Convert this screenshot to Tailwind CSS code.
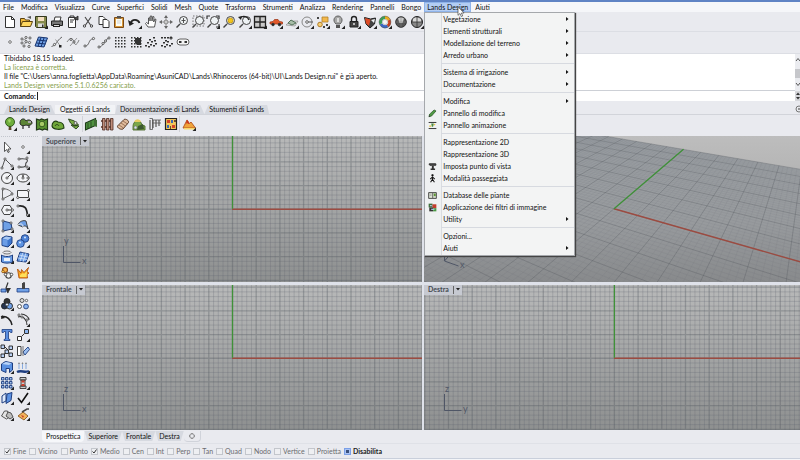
<!DOCTYPE html>
<html lang="it">
<head>
<meta charset="utf-8">
<title>Lands Design</title>
<script src="https://cdn.jsdelivr.net/npm/@tailwindcss/browser@4"></script>
</head>
<body class="h-screen overflow-hidden bg-[#e9eaef] text-[7px] leading-[9px] text-[#111] font-['Lato','Noto_Sans',sans-serif]">
<div class="flex h-full flex-col border-t-2 border-[#5f83c4]">

  <nav class="relative z-20 h-[10px] shrink-0 bg-[#f5f6f9]" aria-label="Menu principale">
    <ul class="flex h-full items-stretch" id="menubar">
      <li><button class="h-full px-[3px]">File</button></li>
      <li><button class="h-full pl-1 pr-[3px]">Modifica</button></li>
      <li><button class="h-full pl-1 pr-[3px]">Visualizza</button></li>
      <li><button class="h-full pl-1 pr-[3px]">Curve</button></li>
      <li><button class="h-full pl-1 pr-[3px]">Superfici</button></li>
      <li><button class="h-full pl-1 pr-[3px]">Solidi</button></li>
      <li><button class="h-full pl-1 pr-[3px]">Mesh</button></li>
      <li><button class="h-full pl-1 pr-[3px]">Quote</button></li>
      <li><button class="h-full pl-1 pr-[3px]">Trasforma</button></li>
      <li><button class="h-full pl-1 pr-[3px]">Strumenti</button></li>
      <li><button class="h-full pl-1 pr-[3px]">Analizza</button></li>
      <li><button class="h-full pl-1 pr-[3px]">Rendering</button></li>
      <li><button class="h-full pl-1 pr-[3px]">Pannelli</button></li>
      <li><button class="h-full pl-1 pr-[3px]">Bongo</button></li>
      <li class="relative">
        <button class="h-full bg-[#b3cdf3] px-[3px] outline outline-1 -outline-offset-1 outline-[#8fb4ea]" aria-expanded="true">Lands Design</button>
        <svg class="absolute left-[33px] top-1 z-10" width="8" height="12" viewBox="0 0 8 12" aria-hidden="true"><path d="M1 .7v8.6l2-1.8 1.3 3 1.4-.6-1.3-2.9h2.7z" fill="#fff" stroke="#444" stroke-width=".7"/></svg>
        <ul id="menu" class="absolute left-0 top-full w-[151px] border border-[#a5a8ac] bg-[linear-gradient(90deg,#eff1f2_16px,#d9dce0_16px,#d9dce0_17px,#f3f4f4_17px)] pb-px shadow-[1px_1px_1px_#444]"></ul>
      </li>
      <li><button class="h-full px-1">Aiuti</button></li>
    </ul>
  </nav>

  <div class="border-b border-[#dcdee4] pl-[3px] pt-px"><div id="std" class="flex h-[18px] w-[421px] items-center justify-between"></div></div>
  <div class="border-b border-[#dcdee4] pb-px pl-[3px]"><div id="pts" class="flex h-5 w-[187px] items-center justify-between"></div></div>

  <section class="flex bg-white" aria-label="Comandi">
    <div class="grow">
      <div class="border-b border-[#cdd0d6] pl-1">
        <p>Tibidabo 18.15 loaded.</p>
        <p class="text-[#86a04c]">La licenza è corretta.</p>
        <p>Il file "C:\Users\anna.foglietta\AppData\Roaming\AsuniCAD\Lands\Rhinoceros (64-bit)\UI\Lands Design.rui" è già aperto.</p>
        <p class="text-[#86a04c]">Lands Design versione 5.1.0.6256 caricato.</p>
      </div>
      <div class="flex h-[10px] items-center pl-1">
        <label for="cmd" class="font-bold">Comando:</label>
        <span class="ml-px h-2 w-px bg-[#222]"></span>
        <input id="cmd" class="h-2 grow outline-none">
      </div>
    </div>
    <div class="flex w-[5px] flex-col justify-between bg-[#ebecf0]">
      <svg width="5" height="36" aria-hidden="true"><path d="M1 7l2-2.500 2 2.500" fill="none" stroke="#555"/><rect y="15" width="5" height="9" fill="#c6c7cb"/><path d="M1 29l2 2.500 2-2.500" fill="none" stroke="#555"/></svg>
      <svg width="5" height="10" aria-hidden="true"><rect width="5" height="10" fill="#d5d6da"/><path d="M1 4l2-2.500 2 2.500zM1 6l2 2.500L5 6z" fill="#333"/></svg>
    </div>
  </section>

  <div class="flex items-end border-b border-[#d2d4da] pl-1 pt-1">
    <button class="h-[9px] bg-[#d6d9e0] px-[5px] [clip-path:polygon(4px_0,calc(100%-4px)_0,100%_100%,0_100%)]">Lands Design</button>
    <button class="h-[9px] bg-[#f2f3f6] px-[5px]" aria-selected="true">Oggetti di Lands</button>
    <button class="h-[9px] bg-[#d6d9e0] px-[5px] [clip-path:polygon(2px_0,calc(100%-4px)_0,100%_100%,0_100%)]">Documentazione di Lands</button>
    <button class="h-[9px] bg-[#d6d9e0] px-[5px] [clip-path:polygon(4px_0,calc(100%-2px)_0,100%_100%,0_100%)]">Stumenti di Lands</button>
    <svg class="ml-auto" width="5" height="9" aria-hidden="true"><circle cx="4" cy="4" r="3" fill="none" stroke="#777"/><circle cx="4" cy="4" r="1" fill="#777"/></svg>
  </div>
  <div class="flex h-[21px] shrink-0 items-center pb-[3px] pl-[3px]">
    <div id="land1" class="flex gap-[2px]"></div>
    <span class="mx-px h-4 w-px bg-[#d0d2d8]"></span>
    <div id="land2" class="flex gap-[2px]"></div>
    <span class="mx-px h-4 w-px bg-[#d0d2d8]"></span>
    <div id="land3" class="flex pl-px"></div>
  </div>

  <main class="flex min-h-0 grow">
    <aside class="flex w-[42px] shrink-0 flex-col" aria-label="Strumenti">
      <div class="mx-px w-[37px] border-t border-dotted border-[#c3c6cd]"></div>
      <div id="side" class="grid grow grid-cols-2 content-between pb-[9px] pr-[10px] pt-[3px]"></div>
    </aside>
    <div class="grid grow grid-cols-[380fr_376fr] grid-rows-2 gap-x-[2px] gap-y-[3px] bg-[#dfe2ea]">
      <section class="relative overflow-hidden bg-linear-to-b from-[#b8b9b9] to-[#8e9090]">
        <svg class="absolute size-full" aria-hidden="true">
          <defs><g id="grid"></g></defs>
          <svg x="50%" y="50%" overflow="visible"><use href="#grid"/><path d="M0 .5h900" stroke="#9c4b41" stroke-width="1.300"/><path d="M.5 0v-600" stroke="#3f9138" stroke-width="1.300"/></svg>
        </svg>
        <header class="relative flex h-[10px] w-fit items-center bg-[#c6c9d1] pl-1 font-bold text-[#454a52]"><h2>Superiore</h2><button class="ml-1 flex h-2 items-center border-l border-[#666] px-[2px]" aria-label="Menu vista Superiore"><svg width="4" height="3"><path d="M0 0h4L2 2.500z" fill="#222"/></svg></button></header>
        <svg class="absolute bottom-4 left-[20px]" width="28" height="30" aria-hidden="true"><path d="M1.500 10v16.500h17" fill="none" stroke="#4f5666"/><text x="2" y="8" font-size="9" fill="#4f5666">y</text><text x="20" y="28" font-size="9" fill="#4f5666">x</text></svg>
      </section>

      <section class="relative overflow-hidden bg-linear-to-b from-[#bdbdbd] to-[#9c9c9c]">
        <svg id="persp" class="absolute size-full" viewBox="0 0 376 146" preserveAspectRatio="xMidYMid slice" aria-hidden="true">
          <defs><linearGradient id="gnd" gradientUnits="userSpaceOnUse" x1="0" y1="0" x2="0" y2="146"><stop offset="0" stop-color="#9a9fa3"/><stop offset=".6" stop-color="#979a9d"/><stop offset="1" stop-color="#888a8c"/></linearGradient></defs>
        </svg>
        <svg class="absolute bottom-3 left-[19px]" width="26" height="20" aria-hidden="true"><path d="M1.500 11l6-7M1.500 11l14 5M1.500 11V0" fill="none" stroke="#4f5666"/><text x="17" y="18" font-size="9" fill="#4f5666">x</text></svg>
      </section>

      <section class="relative overflow-hidden bg-linear-to-b from-[#b8b9b9] to-[#8e9090]">
        <svg class="absolute size-full" aria-hidden="true"><svg x="50%" y="50%" overflow="visible"><use href="#grid"/><path d="M0 .5h900" stroke="#9c4b41" stroke-width="1.300"/><path d="M.5 0v-600" stroke="#3f9138" stroke-width="1.300"/></svg></svg>
        <header class="relative flex h-[10px] w-fit items-center bg-[#c6c9d1] pl-1 font-bold text-[#454a52]"><h2>Frontale</h2><button class="ml-1 flex h-2 items-center border-l border-[#666] px-[2px]" aria-label="Menu vista Frontale"><svg width="4" height="3"><path d="M0 0h4L2 2.500z" fill="#222"/></svg></button></header>
        <svg class="absolute bottom-4 left-[20px]" width="28" height="30" aria-hidden="true"><path d="M1.500 10v16.500h17" fill="none" stroke="#4f5666"/><text x="2" y="8" font-size="9" fill="#4f5666">z</text><text x="20" y="28" font-size="9" fill="#4f5666">x</text></svg>
      </section>

      <section class="relative overflow-hidden bg-linear-to-b from-[#b8b9b9] to-[#8e9090]">
        <svg class="absolute size-full" aria-hidden="true"><svg x="50.5%" y="50%" overflow="visible"><use href="#grid"/><path d="M0 .5h900" stroke="#9c4b41" stroke-width="1.300"/><path d="M.5 0v-600" stroke="#3f9138" stroke-width="1.300"/></svg></svg>
        <header class="relative flex h-[10px] w-fit items-center bg-[#c6c9d1] pl-1 font-bold text-[#454a52]"><h2>Destra</h2><button class="ml-1 flex h-2 items-center border-l border-[#666] px-[2px]" aria-label="Menu vista Destra"><svg width="4" height="3"><path d="M0 0h4L2 2.500z" fill="#222"/></svg></button></header>
        <svg class="absolute bottom-4 left-[19px]" width="28" height="30" aria-hidden="true"><path d="M1.500 10v16.500h17" fill="none" stroke="#4f5666"/><text x="2" y="8" font-size="9" fill="#4f5666">z</text><text x="20" y="28" font-size="9" fill="#4f5666">y</text></svg>
      </section>
    </div>
  </main>

  <div class="flex h-[13px] shrink-0 items-start pl-[42px] pt-px">
    <button class="h-[11px] rounded-b bg-[#f6f7fa] px-1" aria-selected="true">Prospettica</button>
    <button class="h-[10px] bg-[#d6d9e0] px-1 [clip-path:polygon(0_0,100%_0,calc(100%-3px)_100%,3px_100%)]">Superiore</button>
    <button class="h-[10px] bg-[#d6d9e0] px-1 [clip-path:polygon(0_0,100%_0,calc(100%-3px)_100%,3px_100%)]">Frontale</button>
    <button class="h-[10px] bg-[#d6d9e0] px-1 [clip-path:polygon(0_0,100%_0,calc(100%-3px)_100%,3px_100%)]">Destra</button>
    <button class="flex h-[11px] items-center rounded-b border-b border-r border-[#d0d3da] px-[5px]" aria-label="Nuova vista"><svg width="6" height="6"><path d="M2 .5h2v1.500h1.500v2H4v1.500H2V4H.5V2H2z" fill="none" stroke="#777" stroke-width=".7"/></svg></button>
  </div>
  <div id="osnap" class="flex h-[15px] shrink-0 items-center gap-[3px] border-t border-[#dfe1e7] pl-1 text-[#6c6c70]"></div>
  <div class="h-[2px] shrink-0 border-t border-[#c9cfdb] bg-[#f4f5f8]"></div>
</div>

<script>
// Icon artwork, each on a 14 x 14 grid.
const K = '#333', S = (d, c = K, w = 1, f = 'none') => `<path d="${d}" fill="${f}" stroke="${c}" stroke-width="${w}"/>`;
const F = (d, c) => `<path d="${d}" fill="${c}"/>`;
const C = (x, y, r, f = 'none', s = K, w = .9) => `<circle cx="${x}" cy="${y}" r="${r}" fill="${f}" stroke="${s}" stroke-width="${w}"/>`;
const P = (...a) => a.map(([x, y]) => C(x, y, 1.1, '#eee', '#444', .8)).join('');
const dots = [2, 5, 8, 11].map(y => [2, 5, 8, 11].map(x => F(`M${x} ${y}h1.500v1.500h-1.500z`, K)).join('')).join('');
const lens = S('M5 9L1.500 12.500', '#444', 1.500) + C(8.500, 5.500, 4, '#eef2f4', '#444', 1);
const B = '#6fa0e6', BD = '#1e3e80';
const I = {
  new: S('M2.500 1.500h6l3 3v8h-9z', K, 1, '#fff') + S('M8.500 1.500v3h3'),
  open: S('M1.500 11.500v-8h4l1 1.500h4v2', '#5b4310', 1, '#f0b93c') + S('M1.500 11.500l2-5h10l-2 5z', '#5b4310', 1, '#ffd75e') + F('M8 2l4-1v3z', '#555'),
  save: S('M1.500 1.500h11v11h-10l-1-1z', '#33371c', 1, '#858a4c') + F('M4 2h6v4H4z', '#f4dfc0') + F('M4 8.500h6V12H4z', '#dedede') + F('M8 9.500h1.500V12H8z', K),
  print: S('M4 6l1-4h6l-1 4', K, 1, '#fff') + S('M1.500 6h11v4.500h-11z', '#222', 1, '#777') + F('M3 9h7v3H3z', '#222') + F('M4 10h5v1H4z', '#ddd'),
  props: S('M2.500 2.500h7v10h-7z', K, 1, '#fff') + S('M4 2V1h4v1M4 5h4M4 7h3') + S('M8 4l4-3v4z', '#222', .8, '#555'),
  cut: S('M4 2l5.500 8M10 2L4.500 10', '#444', 1.100) + C(3.500, 11, 1.200) + C(10.500, 11, 1.200),
  copy: S('M2 1.500h4l2 2v6H2z', K, 1, '#fff') + S('M6 4.500h4l2 2v6H6z', K, 1, '#fff'),
  paste: S('M2.500 2.500h9v10h-9z', '#7a4a16', 1, '#d99a3d') + F('M4 4h6v7H4z', '#fdfdf4') + F('M5 1h4v2.500H5z', '#555') + S('M5 6h4M5 8h4', '#bbb', .7),
  undo: S('M2.500 8.500C4 3.500 10 4 11.500 8', '#222', 1.800) + F('M0 5l1.500 6 4.500-2.500z', '#222'),
  hand: S('M4 12L1.500 8.500l1-1L4.500 9V3l1.300-.3L6 6l.3-5h1.400L8 6l.8-4.500 1.200.3L9.700 7l1.300-3 1 .4L10.500 12z', '#444', .9, '#fff'),
  rotate: S('M7 1v12M2 7h10', '#888', .8) + F('M7 0l2 3H5zM7 14l2-3H5zM0 7l3-2v4zM14 7l-3-2v4z', '#666') + C(7, 7, 2, '#ccc', '#777', .8),
  zoomdyn: lens + S('M8.500 3v5M6.500 5.500h4', '#444', .9),
  zoomwin: lens + '<rect x="2" y="1" width="11" height="10" fill="none" stroke="#555" stroke-width=".8" stroke-dasharray="1.500 1.500"/>',
  zoomext: lens + S('M1 4V1h3M10 1h3v3M13 9v3h-3', K, 1.200),
  zoomsel: lens + C(8.500, 5.500, 2.600, '#f3c51d', '#a97d00', .6),
  zoomback: lens + S('M2 3c3-3 8-1.500 9 2', '#222', 1.400) + F('M0 2l4-1-1 4z', '#222'),
  four: S('M1.500 1.500h11v11h-11zM7 1.500v11M1.500 7h11', '#222', 1.300, '#c9c9c9'),
  car: S('M1 9V7l3-.5L5.500 4.500h3.500L10.500 6.500l3 .5v2z', '#9a3013', .7, '#e2582a') + C(4, 9.500, 1.300, '#222') + C(10.500, 9.500, 1.300, '#222'),
  cplane: S('M1 10l4-4h8l-3 5z', '#999', .8, '#ddd') + S('M3 8l3-3 5 3-4 2z', '#4a6a50', .9, '#a8bda8'),
  snapc: C(7, 7, 5, 'none', '#888', 1) + S('M7 7h6', '#555', 1) + C(7, 7, 1.300, '#fff', '#555'),
  layers: S('M6 2h6v5H6z', '#b3802a', .8, '#f2b84c') + C(4, 9.500, 2.300, '#f7cf73', '#a8721b') + F('M1 2h2v2H1zM10 9h2v2h-2zM7 11h2v2H7z', '#444'),
  bulb: S('M5 9C1 5.500 3.500 1 7 1s6 4.500 2 8z', '#555', .9, '#a7a7a7') + F('M5 10h4v3H5z', '#555') + F('M6 3h2v4H6z', '#ddd'),
  lock: S('M4.500 6V4a2.500 2.500 0 015 0v2', '#222', 1.400) + S('M3 6.500h8v5.500H3z', '#222', 1, '#444') + F('M6 8h2v2H6z', '#bbb'),
  shade: S('M1.500 2.500l6 1.500 5-1-1 6-4.500 4-4-4z', '#222', 1, '#444') + F('M2 3l5.500 1.500L6 11 3 8.500z', '#dc4b27') + F('M8 5l4-1-1 4z', '#eceff2'),
  wheel: S('M7 2.500a4.500 4.500 0 014 2.500', '#e9a91f', 3) + S('M11 5a4.500 4.500 0 01-1.500 6', '#c8401f', 3) + S('M9.500 11A4.500 4.500 0 013 9', '#3b66c4', 3) + S('M3 9a4.500 4.500 0 014-6.500', '#3d9d57', 3) + C(7, 7, 2.600, '#f4f4f6', '#888', .4) + C(7, 7, 5.900, 'none', '#555', .5),
  ball1: C(7, 7, 5.300, '#555', '#333', 1) + F('M4 3.500c2-1.500 4-1.500 6 0L8.500 8h-3z', '#c9c9c9') + S('M7 2v10M2 7h10', '#888', .5),
  ball2: C(7, 7, 5.500, '#888', '#222', 1) + F('M3 4c2-2 5-2 8 0v3H3z', '#d8d8d8') + S('M7 2v10M2 7h10', '#333', .8),
  pt: C(7, 7, 1.300, '#fff', '#666', .9),
  ptm: P([3, 4], [7, 2.500], [11, 3], [3, 8], [7, 6.500], [10.500, 7.500], [5, 11], [10, 11.500]) + S('M4 5l3-1M5 9l4-2', '#777', .6),
  ptgrid: S('M4.500 2l9 1-3.500 9-9-1zM7 2.500L4 11.500M10 3L7 12M3.500 5l9 1M2.500 8l9 1', '#17336e', 1, B),
  crv1: S('M1.500 11.500C7 10 6 6 12 2', '#555', .9) + S('M5.500 4.500l4.500 6', '#777', .7) + F('M9 10h2.500v2.500H9z', '#222') + P([4.500, 9.500]),
  crv2: S('M1 7c3-5 6-4 7 0s3 3 5-2', '#666', .8) + S('M4 11L11 3', '#777', .7) + P([5, 4.500], [8, 7]),
  crv3: S('M3 11c5 0 3-7 8-7', '#555', .9) + P([3, 11], [11.500, 3.500]),
  crv4: S('M2 12c4 0 3-4 5-4s2-5 5-5', '#555', .9) + P([2, 12], [6, 8.500], [8.500, 6], [12, 3]),
  dots: dots,
  dotsv: dots + F('M6 3h6v7H8l-2-2z', '#333'),
  sc1: [[2, 11], [4, 8], [7, 10], [10, 11], [5, 12], [8, 7], [11, 6], [10, 3], [12, 9], [6, 5]].map(([x, y]) => F(`M${x - 1} ${y - 1}h2v1.500h-2z`, K)).join(''),
  sc2: [[2, 11], [4, 8], [7, 10], [10, 11], [5, 12], [8, 7], [11, 3], [6, 6], [12, 9], [2, 3], [5, 3], [8, 3]].map(([x, y]) => F(`M${x - 1} ${y - 1}h2v1.500h-2z`, K)).join('') + S('M9 3h4M11 1v4', K, .8),
  oval: S('M4 4h6a3 3 0 010 6H4a3 3 0 010-6z', '#555', .9, '#f4f4f4') + F('M3 6h2.500v2H3zM8.500 6H11v2H8.500z', '#333'),
  tree: F('M6 8h2l.5 5h-3z', '#5c4526') + C(7, 5, 4.500, '#6fae3c', '#284e16') + F('M5 3l2-1 1 2-2 2z', '#a6d468'),
  shrubs: S('M1 6c0-5 5-5 6-2 2-2 6-1 6 2 0 2-4 3-6 2-2 1-6 1-6-2z', '#222', 1, '#5c8437') + S('M4 8v4M10 8v3', K, 1.300) + F('M9 4h3v2H9z', '#aaa'),
  hedge: S('M1.500 2l3 1 2-1 3 1 3-1v11l-3-1-2 1-3-1-3 1z', '#22381a', 1.200, '#5a9431') + C(7, 7, 2.800, '#a7cb67', '#2f531c'),
  bush: S('M1 9c0-4 3-6 6-4 4 0 6 2 6 6-3 2-11 2-12-2z', '#1f3d14', 1.100, '#71a83b') + S('M4 9c1-2 3-2 4 0', '#24401a', 1),
  herbs: S('M1.500 2l6 2 4 4-4 1-4-3zM4 8l8 1-3 3z', '#26401c', .9, '#7bad45') + C(8.500, 6, 1.500, '#ddd', '#555'),
  wall: S('M1.500 6l10-4.500v7L1.500 13z', '#1d3a18', 1.100, '#4f9140') + S('M4 6v6M7 4.500v6', '#1d3a18', .7) + F('M10 2l3 1v7l-3-1z', '#426f36'),
  fence: S('M1 4h12M1 10h12', '#5a2f22', 1.500) + [2, 6, 10].map(x => S(`M${x}.5 1.500h2.500V13h-2.500z`, '#4e2c22', .8, '#bf8d7b')).join(''),
  path: S('M1.500 9L8 2.500c2-1 5 1 4.500 3L7 12c-2 1-6-1-5.500-3z', '#5b3b28', 1, '#e0bb9c') + S('M3 8l4.500 3M5 6l4.500 3M7 4l4.500 3', '#8a6148', .8),
  terrain: S('M1 10c0-8 8-8 9-2l3 1v4H1z', '#4c6b2d', .9, '#7ba749') + F('M2 5c2-4 6-3 7 0z', '#e8cd62') + F('M6 9l5-2 1 5-7 1z', '#3d5930') + C(3.500, 10.500, 1.500, '#d7e4ea', '#777', .6),
  posts: S('M2 3v9M5 3v8M8 3v7M11 3v6', '#888', 1.800) + S('M1.500 1.500h3v11h-3M4 3h9M4 6h9', '#555', .8),
  plan: S('M1.500 1.500h11v11h-11z', '#222', 1.200, '#f0c65a') + F('M3 3h3v3H3zM8 8h3v3H8z', '#d2452a') + F('M7 3h2v3H7zM3 8h2v3H3z', '#3b69b4') + F('M10 3h2v2h-2zM6 9h1v3H6z', '#6a4a2a'),
  mount: S('M1 11l4-8 2.500 3.500L9 5l4.500 6z', '#b2521f', .9, '#f0a43a') + F('M5 2.500l2.500 4-1.500.5-1-1.500L3.500 8z', '#c9341c') + F('M2 11h11v1.500H2z', '#f6d86a'),
  arrow: S('M4.500 2v9.500l2.300-2 1.200 3 1.300-.6L8 9h3z', '#444', .9, '#fff'),
  poly: S('M2 12l3-9 7 7', '#444', .9) + P([2, 12], [5, 3], [12, 10]),
  cpts: S('M3 3c12-1 8 3 7 4s2 5-7 4', '#444', 1.100) + P([3, 3], [11, 2], [3, 11], [11, 11]),
  circ: C(7, 7, 5.500, '#f4f5f8', '#444', 1) + S('M7 7l4-4') + P([7, 7]),
  ell: '<ellipse cx="7" cy="7" rx="6" ry="4" fill="#f4f5f8" stroke="#444"/>' + F('M6 3h2v4H6z', '#777') + P([7, 7], [12, 7]),
  arc: S('M2.500 1.500C9 2 12 5 12.500 7L2.500 12z', '#555', .9) + P([3, 2], [12, 7], [3, 12]),
  rect: S('M1.500 3.500h11v7h-11z', '#444', 1, '#f4f5f8') + P([1.800, 10.500], [12.300, 3.500]),
  pgon: S('M4 2.500h6L12.500 7 10 11.500H4L1.500 7z', '#444', 1, '#f4f5f8') + S('M7 7h5') + P([7, 7], [12.500, 7]),
  blend: S('M2 3c7-1 9 2 9.500 10', '#222', 1.700) + P([2, 3], [11.500, 12]),
  srf: S('M3 2l8 2 1 6-9 2z', BD, 1, B) + P([3, 2], [11, 4], [3, 12], [12, 10]),
  srf2: S('M2 6c1-4 6-5 8-4l2 8c-1-3-4-4-5-2z', '#333', .9, B) + S('M2 6c3-2 5-1 5 2', '#eee', 1),
  box: S('M2 4l4-2 6 1v6l-4 4-6-1.500z', BD, 1, '#3e76cd') + F('M2.500 4.500L6 2.500l5.500 1L8 6z', '#a9c9f4') + F('M2.500 5l5 1v6l-5-1z', '#6a9ce6'),
  spheres: C(9, 4.500, 3.800, '#4c82d6', BD) + C(4.500, 9.500, 3.800, '#5d93e2', BD) + C(4, 8.500, 1, '#d6e6fb', 'none') + C(9, 3.500, 1, '#d6e6fb', 'none'),
  cyl: '<ellipse cx="7" cy="2.500" rx="4" ry="1.500" fill="none" stroke="#777"/>' + S('M1.500 5c3 2 8 2 11 0v7c-3 1.500-8 1.500-11 0z', BD, 1, B) + F('M4 8h6v3H4z', '#eaf2fd'),
  patch: S('M4 2l9 2-3 8-9-1z', BD, 1, B) + S('M3 5l9 2M2 8l9 1.500M7 2.500l-3 9M10 3l-3 9', '#e0ebfa', .7),
  gears: C(5, 4, 2.500, '#f8b24a', '#8d4b12', 1.100) + C(3, 5.500, 1.300, '#f8cf52', '#8d4b12', .8) + C(8.500, 9.500, 2.700, '#f2f2f2', '#444', 1.100) + C(11.500, 8.500, 1.300, '#fff', '#444', .9) + C(5.500, 8.500, 1.300, '#fff', '#444', .9),
  boom: S('M1.500 3l3.500 4 .5-3.500 2.500 3L12.500 1.500 11 6l2 1-2 1.500.5 3.500H3z', '#b3530f', .9, '#f9a51e') + F('M4 9l3-2 1 1 3-3-.5 6H4z', '#ffe05a'),
  trim: S('M8 1.500L6 7l2 5', '#333', 1.200) + S('M1 8h5v3H1z', BD, .8, B) + F('M6 7h5l-3 5z', '#333'),
  split: S('M8 1v9', '#333', 1.300) + S('M1 7.500h12v3.500H1z', BD, .8, B) + F('M6 2h3v6H6z', '#444'),
  group: C(7, 4.500, 3, '#333', '#222') + C(4.500, 9, 3, '#24324e', '#222') + C(9.500, 9, 3, '#6fa0e6', '#222') + C(7, 7.500, 1.600, '#dfe9f8', '#333'),
  ungroup: C(6, 3.500, 2, '#ddd', '#444') + C(3.500, 9.500, 2, '#fff', '#444') + C(10, 9.500, 2.400, '#88b2ef', '#24427d') + C(10.500, 3.500, 1.200, '#fff', '#555'),
  off1: S('M1 4c6-2 10 3 11 8', '#222', 1.500) + F('M2 2l3 3-4 1z', '#222'),
  off2: S('M2 4c5-2 9 3 9 8M5 1c4 0 8 3 8 6', '#333', 1.100) + P([3, 2], [11, 7], [6, 4]),
  text: S('M2 1.500h10v3h-1.500L10 3.500H8.500V11l1.500.5v1H4v-1l1.500-.5V3.500H4L3.500 4.500H2z', BD, .8, '#5b8fe0'),
  move: S('M1.500 8.500h4v4h-4z', K, 1, '#fff') + S('M8.500 1.500h4v4h-4z', K, 1, '#8db5ef') + S('M6 8l2-2'),
  blocks: [[1, 1], [9, 2], [5, 6], [1, 10], [9, 9]].map(([x, y]) => S(`M${x} ${y}h3.500v3.500h-3.500z`, '#222', .9, '#b9d0f4')).join('') + S('M5 3l3 3M4 10l2-1'),
  orient: S('M1.500 2.500h3.500v9H1.500z', '#444', 1, '#fff') + S('M7 8l5-5 1.500 2.500L9 11z', BD, .9, '#9cc0f2') + S('M7 2v10', '#555', .8),
  solid: S('M1.500 4l4-2.500 7 1.500v7l-3 2.500v-4H6v4l-4.500-2z', BD, 1, '#5c92e2') + F('M2 4l4-2 5.500 1L9 5z', '#b9d4f8'),
  dir: S('M1 12c4-2 8 1 12-1', BD, 2.500) + S('M3 9V3M6.500 9V3M10 9V3', '#7aa3dc', .9) + F('M2 4l1-2 1 2zM5.500 4l1-2 1 2zM9 4l1-2 1 2z', '#888'),
  array: [1, 5, 9].map(y => [1, 5, 9].map(x => S(`M${x}.5 ${y}.5h2.500v2.500h-2.500z`, BD, .9, '#a9c5ee')).join('')).join(''),
  bolt: S('M4 1.500h6v2.500H4zM5 4h4v6H5zM4 10h6v2.500H4z', '#333', .9, '#ccc') + F('M5.500 4.500h3v2h-3zM5.500 8h3v2h-3z', '#c8402c'),
  box2: S('M2 5l4-3v8l-4 2z', BD, 1, '#dfeafb') + S('M7 3l5-1.500-1 8L6 12.500z', BD, 1, '#5c92e2'),
  check: S('M2 7l3.500 4.500L12 2', '#111', 1.600),
  prism: S('M1.500 9l3-5h3l2 6-3 2z', '#444', .9, '#e4e4e4') + S('M6 9l2-4 3 1 2 4-3 2z', '#444', .9, '#bdbdbd'),
  cake: S('M2 9l5-4 5 4-4 4z', '#8d5a1c', .9, '#f2b35a') + S('M6 5l5-3h2', '#444', 1.500) + F('M5 8l3 1-1 2z', '#c9402a'),
  pencil: S('M1.500 12l1-4 7-6.500 3 1.500-7 8z', '#1f4a1c', 1, '#4f9a43') + F('M1 13l1-3 2 1z', '#333'),
  anim: F('M1 1.500h12v1.500H1z', '#333') + F('M5 4h4l-1 5H6z', '#4a8a42') + F('M9 4l3 2-3 1z', '#e5c13a') + F('M1 11h12v1.500H1z', '#333') + F('M2 7h3v2H2z', '#e5c13a'),
  view: S('M1 4h12M2 2.500h10v3H3z', '#222', 1, '#777') + F('M6 6h3v4h2v2.500H4V10h2z', '#333'),
  walk: C(7, 2, 1.500, '#111', '#111', .5) + S('M7 4v4l-3 5M7 8l3 5M3.500 8L7 4.500 10.500 8', '#111', 1.600),
  db: S('M1 2.500h12v9H1z', '#222', 1.200, '#dde3d5') + F('M7 3h1v8H7z', '#222') + F('M9 4h3v4H9z', '#5a9431') + S('M2.500 5h3M2.500 7h3', '#888', .8),
  filt: F('M1 1h6v6H1z', '#3c6d3a') + F('M7 2h6v6H7z', '#c33d2d') + F('M2 7h6v6H2z', '#333') + F('M8 8h5v5H8z', '#4a9a45') + F('M3 3h3v2H3zM5 9h5v2H5z', '#a9bfd8')
};
const icon = (n, fly) => `<svg class="size-[14px]" viewBox="0 0 14 14" aria-hidden="true">${I[n]}${fly ? '<path d="M14 10.500V14h-3.500z" fill="#222"/>' : ''}</svg>`;
// Items are "icon:Label"; a leading + marks a flyout button.
const bar = (id, list) => document.getElementById(id).innerHTML = list.split(',').map(s => {
  const fly = s[0] === '+', [n, label] = s.replace('+', '').split(':');
  return `<button class="size-[14px] shrink-0" aria-label="${label}">${icon(n, fly)}</button>`;
}).join('');
bar('std', 'new:Nuovo,open:Apri,+save:Salva,print:Stampa,props:Proprietà,cut:Taglia,copy:Copia,paste:Incolla,+undo:Annulla,hand:Panoramica,rotate:Ruota vista,zoomdyn:Zoom dinamico,zoomwin:Zoom finestra,+zoomext:Zoom estensioni,zoomsel:Zoom selezione,+zoomback:Vista precedente,+four:Quattro viste,+car:Vista auto,+cplane:Piano di costruzione,+snapc:Snap,+layers:Livelli,+bulb:Nascondi,+lock:Blocca,+shade:Ombreggia,+wheel:Colori,ball1:Rendering,+ball2:Anteprima');
bar('pts', 'pt:Punto,ptm:Punti,ptgrid:Griglia di punti,crv1:Punto su curva,crv2:Intersezione,crv3:Estremi,crv4:Dividi curva,dots:Matrice,dotsv:Volume,sc1:Nuvola,sc2:Aggiungi a nuvola,oval:Maschera');
bar('land1', '+tree:Albero,shrubs:Arbusti,hedge:Siepe,bush:Cespuglio,herbs:Erbacee');
bar('land2', 'wall:Muro,fence:Recinzione,path:Percorso,terrain:Terreno,posts:Pali,plan:Arredo');
bar('land3', '+mount:Rilievo');
bar('side', 'arrow:Seleziona,+pt:Punto,+poly:Polilinea,+cpts:Curva,+circ:Cerchio,+ell:Ellisse,+arc:Arco,+rect:Rettangolo,+pgon:Poligono,+blend:Raccordo,+srf:Superficie,+srf2:Raccorda superfici,+box:Parallelepipedo,+spheres:Booleana,+cyl:Proietta,+patch:Mesh,gears:Unisci,boom:Esplodi,trim:Tronca,split:Suddividi,+group:Raggruppa,ungroup:Separa,off1:Offset,+off2:Punti,text:Testo,+move:Sposta,blocks:Copia,orient:Orienta,+solid:Solido,+dir:Direzione,+array:Serie,+bolt:Blocco,+box2:Analizza,+check:Controlla,+prism:Forme,+cake:Taglio');

// Drop-down entries: [label, icon, has submenu]; null is a separator.
document.getElementById('menu').innerHTML = [
  ['Vegetazione', '', 1], ['Elementi strutturali', '', 1], ['Modellazione del terreno', '', 1], ['Arredo urbano', '', 1], null,
  ['Sistema di irrigazione', '', 1], ['Documentazione', '', 1], null,
  ['Modifica', '', 1], ['Pannello di modifica', 'pencil'], ['Pannello animazione', 'anim'], null,
  ['Rappresentazione 2D'], ['Rappresentazione 3D'], ['Imposta punto di vista', 'view'], ['Modalità passeggiata', 'walk'], null,
  ['Database delle piante', 'db'], ['Applicazione dei filtri di immagine', 'filt'], ['Utility', '', 1], null,
  ['Opzioni...'], ['Aiuti', '', 1]
].map(e => !e ? '<li class="ml-4 py-[2px]" role="separator"><div class="h-px bg-[#d7dae0]"></div></li>' :
  `<li><button class="flex h-3 w-full items-center pr-[5px] text-left"><span class="flex w-[18px] justify-center pr-[3px]">${e[1] ? `<svg class="size-[9px]" viewBox="0 0 14 14" aria-hidden="true">${I[e[1]]}</svg>` : ''}</span><span class="grow whitespace-nowrap">${e[0]}</span>${e[2] ? '<svg width="3" height="4" aria-hidden="true"><path d="M0 0l2.500 2L0 4z" fill="#111"/></svg>' : ''}</button></li>`).join('');

document.getElementById('osnap').innerHTML = ['Fine', 'Vicino', 'Punto', 'Medio', 'Cen', 'Int', 'Perp', 'Tan', 'Quad', 'Nodo', 'Vertice', 'Proietta', 'Disabilita'].map((t, i) => {
  const on = t === 'Fine' || t === 'Medio', last = t === 'Disabilita';
  return `<label class="flex items-center gap-[2px] ${last ? 'font-bold text-[#222]' : ''}"><span class="grid size-[7px]"><input type="checkbox" ${on || last ? 'checked' : ''} class="col-start-1 row-start-1 size-[7px] appearance-none border ${last ? 'border-[#7ba0e8] bg-[#a9c3f4]' : 'border-[#c3c6cc] bg-[#eeeff2]'}"><svg class="pointer-events-none col-start-1 row-start-1 size-[7px]" viewBox="0 0 7 7" aria-hidden="true">${last ? '<path d="M2 2h3v3H2z" fill="#39507e"/>' : on ? '<path d="M1.500 3.500L3 5l2.500-3.500" fill="none" stroke="#333"/>' : ''}</svg></span>${t}</label>`;
}).join('');

// Construction-plane grid around the origin: a major line every fifth step.
let thin = '', thick = '';
for (let i = -100; i <= 100; i++) {
  const p = (i * 4.74 + .5).toFixed(2), d = `M${p} -480V480M-480 ${p}H480`;
  if (i % 5) thin += d; else thick += d;
}
document.getElementById('grid').innerHTML = S(thin, 'rgb(92 98 108 / .24)', 1) + S(thick, 'rgb(84 88 96 / .36)', 1.3);

// Perspective ground plane: homogeneous blend of the origin and two vanishing points.
const pt = (u, v) => {
  const a = -.295 * u, b = .509 * v, w = 1 + a + b;
  return [(190 - 427 * a + 396 * b) / w, (73 - 103 * a - 103 * b) / w].map(n => n.toFixed(1)).join(' ');
};
const N = 8, minor = [], major = [];
for (let i = -N * 5; i <= N * 5; i++) {
  const t = i / (N * 5);
  (i % 5 ? minor : major).push(`M${pt(t, -1)}L${pt(t, 1)}M${pt(-1, t)}L${pt(1, t)}`);
}
document.getElementById('persp').insertAdjacentHTML('beforeend',
  `<path d="M${pt(-1, -1)}L${pt(1, -1)}L${pt(1, 1)}L${pt(-1, 1)}z" fill="url(#gnd)"/><rect y="60" width="230" height="90" fill="url(#gnd)"/>` +
  `<path d="${minor.join('')}" stroke="#565c66" stroke-opacity=".1" stroke-width=".7"/>` +
  `<path d="${major.join('')}" stroke="#4c5056" stroke-opacity=".36" stroke-width=".8"/>` +
  `<path d="M${pt(0, 0)}L${pt(1, 0)}" stroke="#9c4b41" stroke-width="1.300"/><path d="M${pt(0, 0)}L${pt(0, 1)}" stroke="#3f9138" stroke-width="1.300"/>`);
</script>
</body>
</html>
